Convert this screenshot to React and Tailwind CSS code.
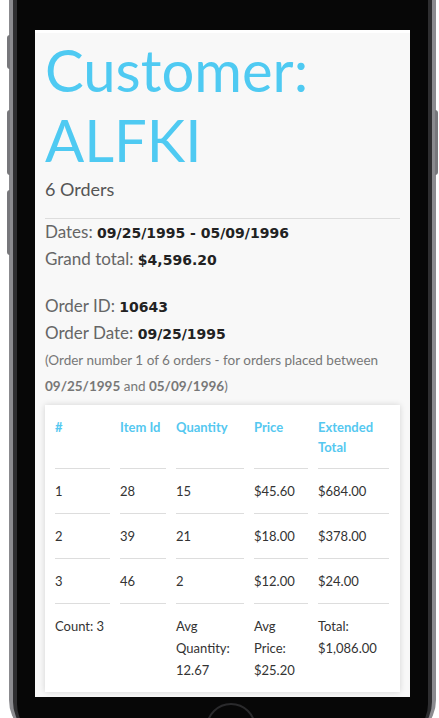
import React from "react";

const rows = [
  ["1", "28", "15", "$45.60", "$684.00"],
  ["2", "39", "21", "$18.00", "$378.00"],
  ["3", "46", "2", "$12.00", "$24.00"],
];

function Cell({ children, head, last }) {
  return (
    <div
      className={
        "text-[13px] " +
        (head ? "pt-[12px] pb-[11px] leading-[20px] " : "pt-[11px] leading-[22px] ") +
        (last ? "pb-[8px] " : "border-b border-[#dddddd] ") +
        (!head && !last ? "pb-[11px] " : "") +
        (head ? "font-bold text-[#55c8f0]" : "text-[#333333]")
      }
    >
      {children}
    </div>
  );
}

export default function App() {
  return (
    <div className="relative w-[439px] h-[718px] overflow-hidden bg-white font-['Lato',sans-serif]">
      {/* side buttons */}
      <div className="absolute left-[7px] top-[35px] w-[3px] h-[34px] rounded-l bg-[#77777b]" />
      <div className="absolute left-[7px] top-[110px] w-[3px] h-[65px] rounded-l bg-[#77777b]" />
      <div className="absolute left-[7px] top-[190px] w-[3px] h-[65px] rounded-l bg-[#77777b]" />
      <div className="absolute left-[435px] top-[110px] w-[3px] h-[65px] rounded-r bg-[#77777b]" />

      <div className="ml-[9px] w-[427px] h-[780px] -mt-[40px] bg-[#8b8b8f] px-[4px] rounded-[40px]">
        <div className="h-full bg-[#2e2e30] px-[4px] rounded-[38px]">
          <div className="h-full bg-[#070707] pl-[18px] pr-[2px] pt-[70px] rounded-[36px]">
            <div className="relative w-[375px] h-[667px] bg-[#f8f8f8] border-t-[3px] border-white px-[10px]">
              <h1 className="text-[#4fcaf2] text-[58px] leading-[70px] pt-[2px]">
                Customer:
                <br />
                ALFKI
              </h1>
              <div className="text-[18px] leading-[26px] text-[#555555] mt-[1px]">6 Orders</div>
              <div className="border-t border-[#dddddd] mt-[16px]" />
              <div className="text-[17px] leading-[26px] text-[#666666]">
                <div>
                  Dates:{" "}
                  <b className="font-['DejaVu_Sans',sans-serif] text-[14px] text-[#222222]">
                    09/25/1995 - 05/09/1996
                  </b>
                </div>
                <div>
                  Grand total:{" "}
                  <b className="font-['DejaVu_Sans',sans-serif] text-[14px] text-[#222222]">$4,596.20</b>
                </div>
                <div className="mt-[20px]">
                  Order ID:{" "}
                  <b className="font-['DejaVu_Sans',sans-serif] text-[14px] text-[#222222]">10643</b>
                </div>
                <div>
                  Order Date:{" "}
                  <b className="font-['DejaVu_Sans',sans-serif] text-[14px] text-[#222222]">09/25/1995</b>
                </div>
              </div>
              <div className="text-[13.5px] leading-[26px] text-[#777777]">
                (Order number 1 of 6 orders - for orders placed between{" "}
                <b>09/25/1995</b> and <b>05/09/1996</b>)
              </div>

              <div className="mt-[6px] bg-white px-[10px] shadow-[0_0_6px_rgba(0,0,0,0.15)] h-[287px]">
                <div className="grid grid-cols-[55px_46px_68px_54px_71px] gap-x-[10px]">
                  <Cell head>#</Cell>
                  <Cell head>Item Id</Cell>
                  <Cell head>Quantity</Cell>
                  <Cell head>Price</Cell>
                  <Cell head>
                    Extended
                    <br />
                    Total
                  </Cell>
                  {rows.map((r) =>
                    r.map((c, i) => <Cell key={r[0] + "-" + i}>{c}</Cell>)
                  )}
                  <Cell last>Count: 3</Cell>
                  <Cell last></Cell>
                  <Cell last>
                    Avg
                    <br />
                    Quantity:
                    <br />
                    12.67
                  </Cell>
                  <Cell last>
                    Avg
                    <br />
                    Price:
                    <br />
                    $25.20
                  </Cell>
                  <Cell last>
                    Total:
                    <br />
                    $1,086.00
                  </Cell>
                </div>
              </div>
            </div>
            <div className="mx-auto mt-[6px] w-[50px] h-[50px] rounded-full border-2 border-[#2a2a2c]" />
          </div>
        </div>
      </div>
    </div>
  );
}
